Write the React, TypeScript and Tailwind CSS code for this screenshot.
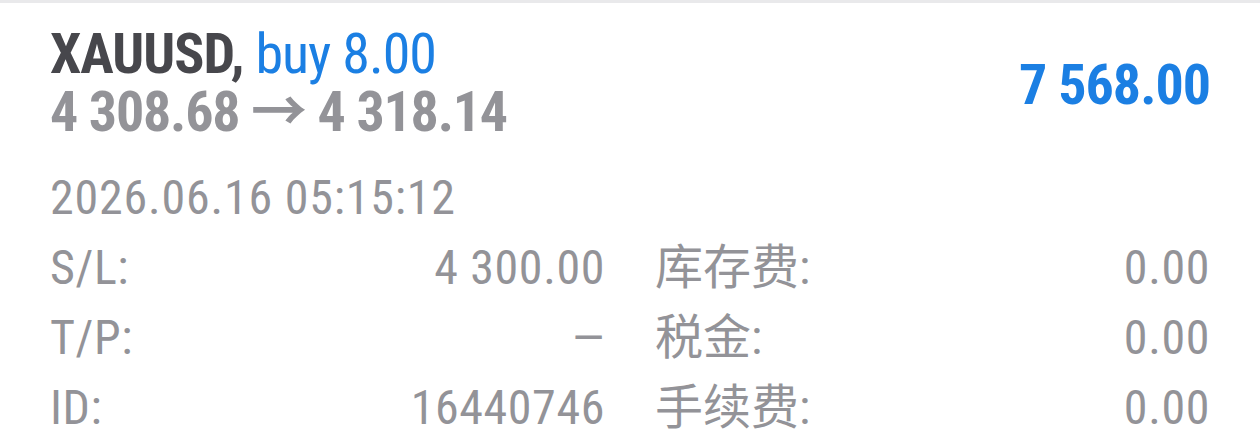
import React from "react";

const rows = [
  { l: "S/L:", v: "4 300.00", l2: "库存费:", v2: "0.00" },
  { l: "T/P:", v: "—", l2: "税金:", v2: "0.00" },
  { l: "ID:", v: "16440746", l2: "手续费:", v2: "0.00" },
];

export default function App() {
  return (
    <div className="w-[1260px] h-[430px] overflow-hidden bg-white font-['Roboto','Noto_Sans_CJK_SC',sans-serif]">
      <div className="h-[3px] bg-[#e9e9eb]" />
      <div className="flex items-start justify-between pl-[50px] pr-[50px] pt-[22px] [font-stretch:condensed]">
        <div className="flex flex-col">
          <div className="text-[56px] leading-[58px] font-bold tracking-[-1px]">
            <span className="text-[#47474c]">XAUUSD, </span>
            <span className="font-normal text-[#1b7fe3]">buy 8.00</span>
          </div>
          <div className="text-[56px] leading-[58px] font-bold tracking-[-1.2px] text-[#939398]">
            4 308.68 → 4 318.14
          </div>
        </div>
        <div className="pt-[31px] text-[56px] leading-[58px] font-bold tracking-[-1px] text-[#1b7fe3]">
          7 568.00
        </div>
      </div>
      <div className="pl-[50px] pt-[29px] text-[48px] leading-[56px] tracking-[0.8px] text-[#939398] [font-stretch:condensed]">
        2026.06.16 05:15:12
      </div>
      <div className="mt-[7px] grid grid-cols-[555px_50px_555px] pl-[50px] text-[48px] leading-[70px] text-[#939398] [font-stretch:condensed]">
        {rows.map((r) => (
          <React.Fragment key={r.l}>
            <div className="flex justify-between tracking-[0.6px]">
              <span>{r.l}</span>
              <span>{r.v}</span>
            </div>
            <div />
            <div className="flex justify-between">
              <span>{r.l2}</span>
              <span className="tracking-[0.6px]">{r.v2}</span>
            </div>
          </React.Fragment>
        ))}
      </div>
    </div>
  );
}
